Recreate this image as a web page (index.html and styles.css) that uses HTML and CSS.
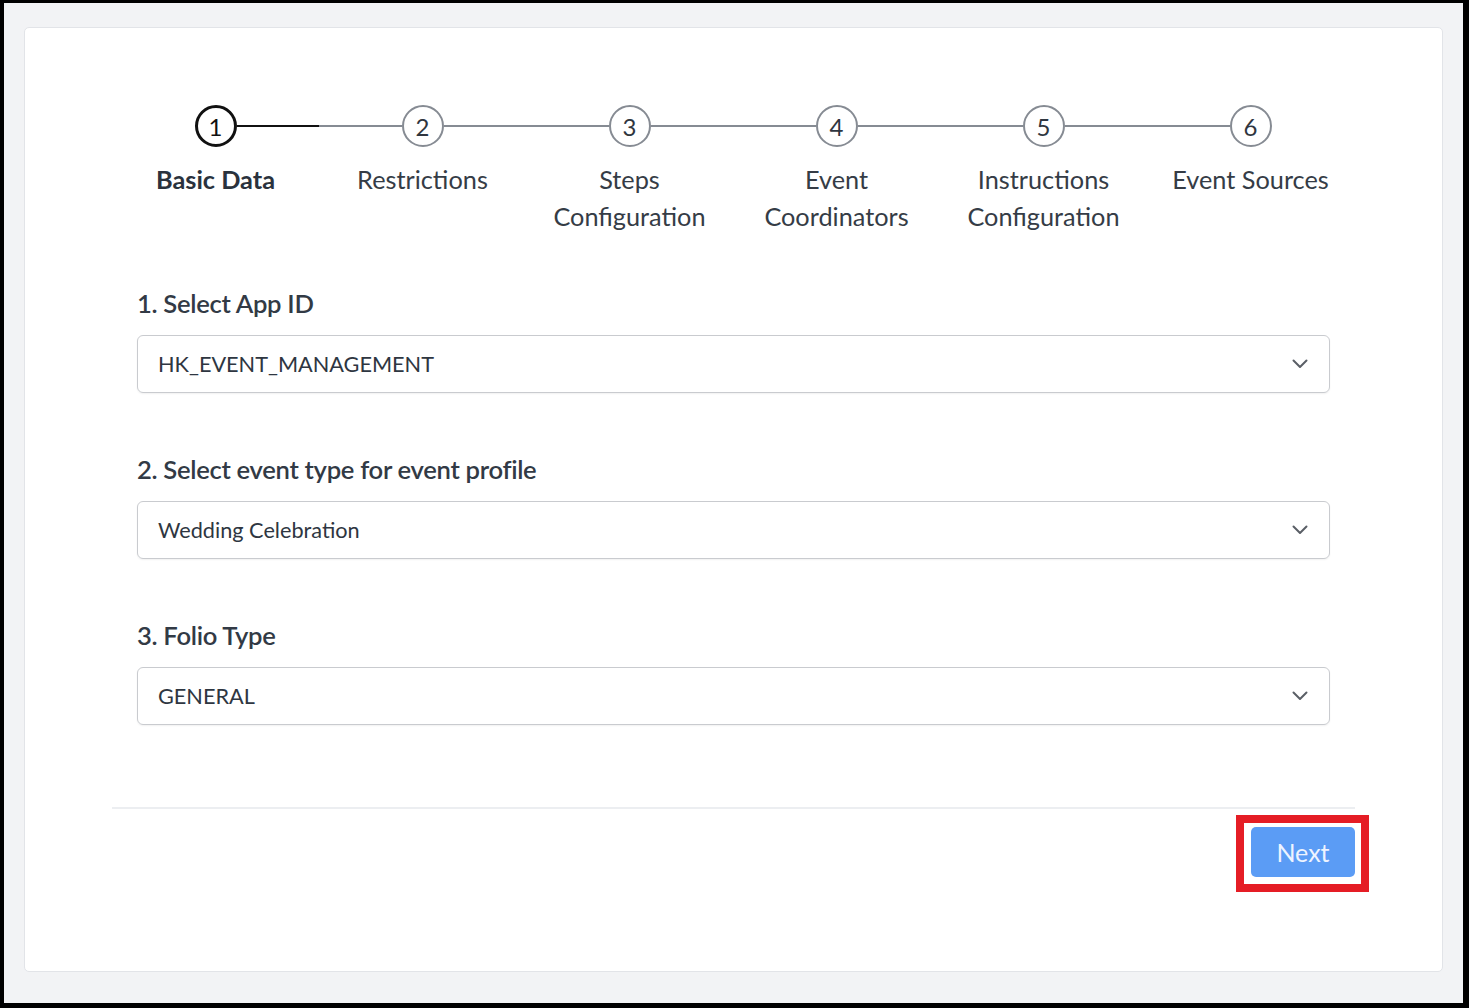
FILE: index.html
```html
<!DOCTYPE html>
<html lang="en">
<head>
<meta charset="utf-8">
<title>Event Profile</title>
<link rel="stylesheet" href="styles.css">
</head>
<body>
<div class="frame">
  <div class="card">
    <ol class="stepper">
      <li class="step active"><span class="circle">1</span><span class="label">Basic Data</span></li>
      <li class="step"><span class="circle">2</span><span class="label">Restrictions</span></li>
      <li class="step"><span class="circle">3</span><span class="label">Steps Configuration</span></li>
      <li class="step"><span class="circle">4</span><span class="label">Event Coordinators</span></li>
      <li class="step"><span class="circle">5</span><span class="label">Instructions Configuration</span></li>
      <li class="step"><span class="circle">6</span><span class="label">Event Sources</span></li>
    </ol>

    <div class="form">
      <div class="field">
        <div class="field-label">1. Select App ID</div>
        <div class="select"><span>HK_EVENT_MANAGEMENT</span><svg class="chev" viewBox="0 0 16 10" width="16" height="10"><path d="M1.5 1.5 L8 8 L14.5 1.5" fill="none" stroke="#5a5f66" stroke-width="2" stroke-linecap="round" stroke-linejoin="round"/></svg></div>
      </div>
      <div class="field">
        <div class="field-label">2. Select event type for event profile</div>
        <div class="select"><span>Wedding Celebration</span><svg class="chev" viewBox="0 0 16 10" width="16" height="10"><path d="M1.5 1.5 L8 8 L14.5 1.5" fill="none" stroke="#5a5f66" stroke-width="2" stroke-linecap="round" stroke-linejoin="round"/></svg></div>
      </div>
      <div class="field">
        <div class="field-label">3. Folio Type</div>
        <div class="select"><span>GENERAL</span><svg class="chev" viewBox="0 0 16 10" width="16" height="10"><path d="M1.5 1.5 L8 8 L14.5 1.5" fill="none" stroke="#5a5f66" stroke-width="2" stroke-linecap="round" stroke-linejoin="round"/></svg></div>
      </div>
    </div>

    <div class="footer">
      <span class="highlight"><button class="next" type="button">Next</button></span>
    </div>
  </div>
</div>
</body>
</html>
```

FILE: styles.css
```css
html, body {
  margin: 0;
  padding: 0;
  background: #000;
}
body {
  width: 1469px;
  height: 1008px;
  box-sizing: border-box;
  padding: 3px 6px 5px 4px;
  font-family: Lato, "Open Sans", Arial, sans-serif;
  color: #333a44;
}
.frame {
  height: 100%;
  background: #f2f3f5;
  padding: 24px 20px 0 20px;
  box-sizing: border-box;
}
.card {
  width: 1419px;
  height: 945px;
  box-sizing: border-box;
  background: #fff;
  border: 1px solid #e2e4e8;
  border-radius: 5px;
  padding: 77px 87px 0 87px;
}
.stepper {
  list-style: none;
  margin: 0;
  padding: 0;
  display: grid;
  grid-template-columns: repeat(6, 207px);
}
.step {
  position: relative;
  display: flex;
  flex-direction: column;
  align-items: center;
}
.step:not(:last-child)::after {
  content: "";
  position: absolute;
  top: 20px;
  left: calc(50% + 21px);
  width: 165px;
  height: 2px;
  background: #868b93;
}
.step.active::after {
  background: linear-gradient(to right, #111 0, #111 82px, #868b93 82px);
}
.circle {
  width: 42px;
  height: 42px;
  box-sizing: border-box;
  border: 2px solid #868b93;
  border-radius: 50%;
  display: flex;
  align-items: center;
  justify-content: center;
  font-size: 24px;
  color: #2f3640;
  background: #fff;
}
.step.active .circle {
  border: 3px solid #111;
  color: #111;
}
.label {
  margin-top: 14px;
  font-size: 25.3px;
  line-height: 37px;
  text-align: center;
  color: #353c46;
  width: 180px;
}
.step.active .label {
  font-weight: 700;
  color: #2a323d;
}
.form {
  padding: 50px 25px 0 25px;
}
.field {
  margin-bottom: 58px;
}
.field:last-child {
  margin-bottom: 0;
}
.field-label {
  font-size: 25.6px;
  line-height: 36px;
  font-weight: 600;
  color: #323a45;
  margin-bottom: 14px;
  letter-spacing: -0.3px;
}
.select {
  height: 58px;
  box-sizing: border-box;
  border: 1.5px solid #c9cbcf;
  border-radius: 6px;
  box-shadow: 0 1px 2px rgba(0,0,0,0.06);
  display: flex;
  align-items: center;
  justify-content: space-between;
  padding: 0 21px 0 20px;
  font-size: 21.7px;
  color: #2e3641;
}
.footer {
  margin-top: 82px;
  border-top: 2px solid #eceef1;
  display: flex;
  justify-content: flex-end;
  padding-top: 18px;
}
.highlight {
  position: relative;
  display: block;
  line-height: 0;
}
.highlight::after {
  content: "";
  position: absolute;
  left: -15px;
  right: -14px;
  top: -12px;
  bottom: -15px;
  border: 8px solid #e51d25;
  pointer-events: none;
}
.next {
  width: 104px;
  height: 50px;
  border: none;
  border-radius: 5px;
  background: #5b9cf5;
  color: #eef4ff;
  font-family: Lato, "Open Sans", Arial, sans-serif;
  font-size: 25px;
  line-height: 50px;
  padding: 0;
}
```
